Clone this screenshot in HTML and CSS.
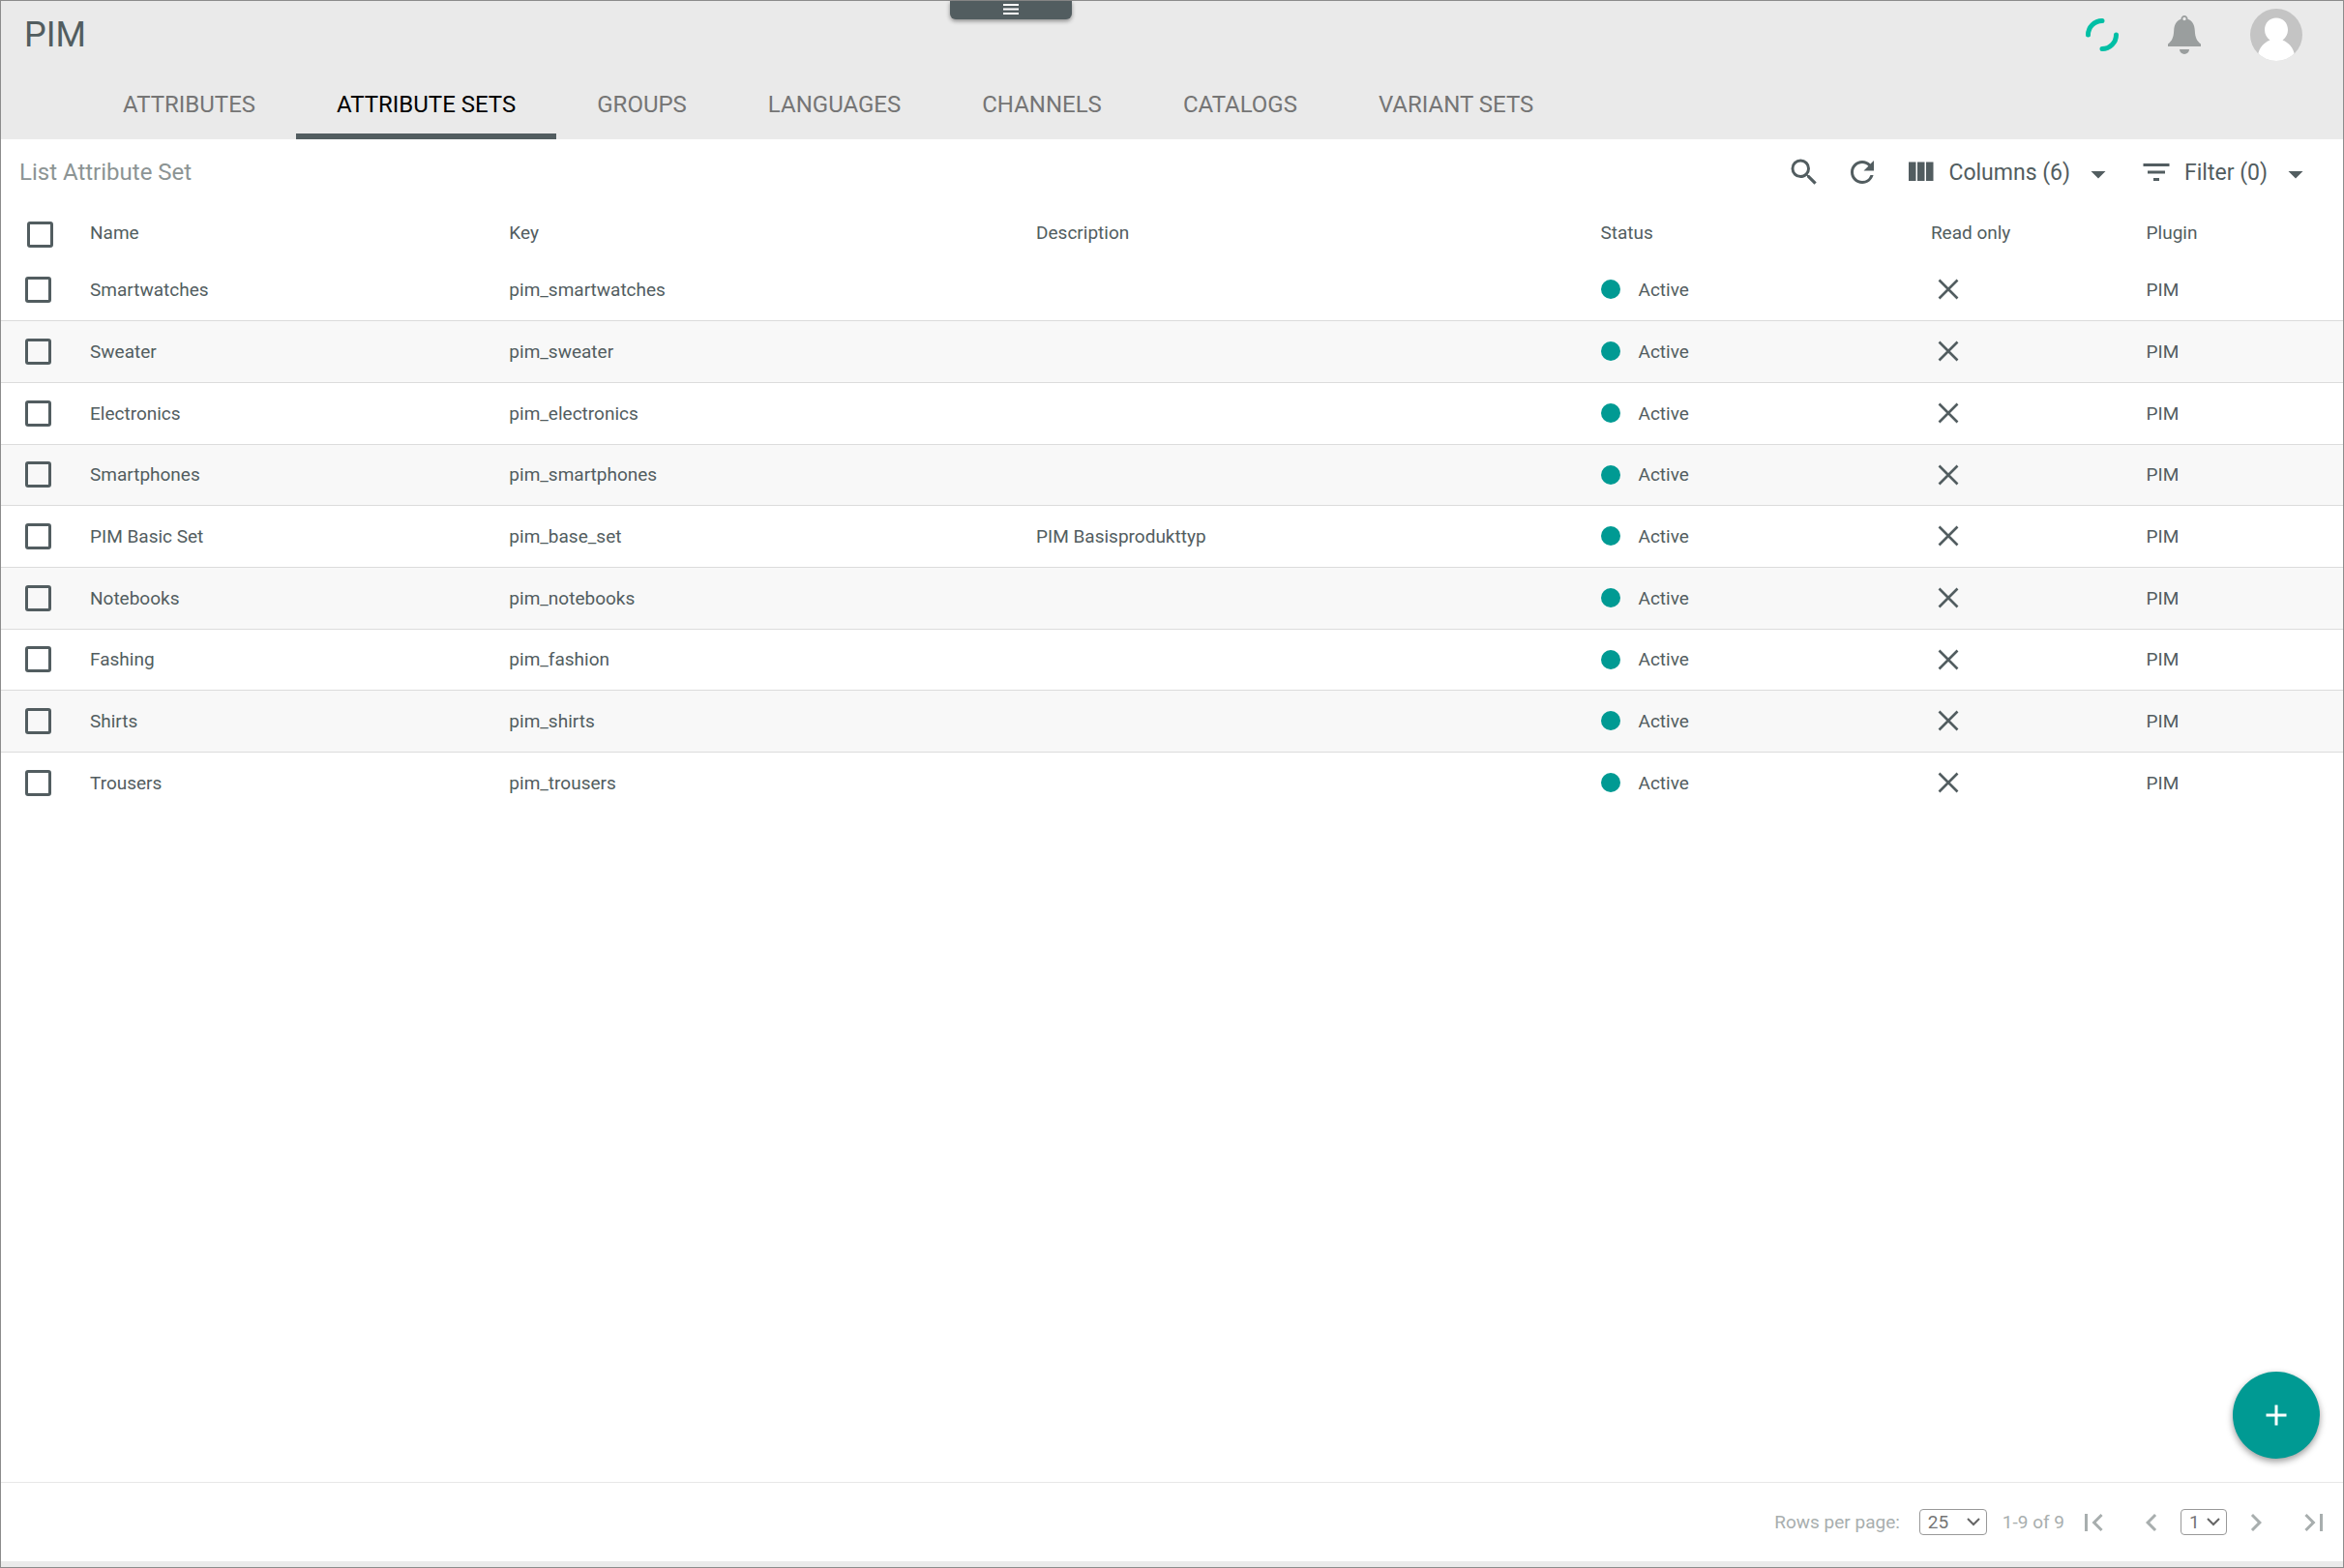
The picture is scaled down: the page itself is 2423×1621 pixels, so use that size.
FILE: index.html
```html
<!DOCTYPE html>
<html lang="en">
<head>
<meta charset="utf-8">
<title>PIM</title>
<link rel="stylesheet" href="styles.css">
</head>
<body>
<svg class="sprite" aria-hidden="true">
  <symbol id="close" viewBox="0 0 24 24"><path d="M2.5 2.5l19 19M21.5 2.5l-19 19" fill="none" stroke="currentColor" stroke-width="2.6"/></symbol>
  <symbol id="drop" viewBox="0 0 24 24"><path d="M7 11.3l5 5 5-5z"/></symbol>
</svg>
<div class="app">
  <header class="header">
    <button class="drawer" aria-label="Open menu"><svg class="drawer-icon" viewBox="0 0 16 11"><path d="M0 0h16v2H0zM0 4.5h16v2H0zM0 9h16v2H0z"/></svg></button>
    <div class="topbar">
      <h1 class="title">PIM</h1>
      <div class="user">
        <svg class="spinner" viewBox="0 0 34 34"><path d="M2.5 17A14.500 14.500 0 0 1 17 2.500M31.500 17A14.500 14.500 0 0 1 17 31.500" fill="none" stroke="#00bfa5" stroke-width="5" stroke-linecap="round"/></svg>
        <button class="plain" aria-label="Notifications"><svg class="bell" viewBox="0 0 34 40"><path fill-rule="evenodd" d="M17 0a3.500 3.500 0 0 1 3.500 3.800C25.500 5.500 27.500 10 27.800 15.500 28.200 22.500 29.500 26 34 29.500V32H0V29.500C4.500 26 5.800 22.500 6.200 15.500 6.500 10 8.500 5.500 13.500 3.800A3.500 3.500 0 0 1 17 0zM17 1.800a1.700 1.700 0 1 0 0 3.400 1.700 1.700 0 0 0 0-3.400zM12 35h10a5 5 0 0 1-10 0z"/></svg></button>
        <button class="plain" aria-label="Account"><svg class="avatar" viewBox="0 0 54 54"><defs><clipPath id="round"><circle cx="27" cy="27" r="27"/></clipPath></defs><g clip-path="url(#round)"><path fill="#c4c4c4" d="M0 0h54v54H0z"/><path fill="#fff" d="M27 9.500c7 0 12 5.200 12 12.500 0 4.500-2.300 8-5.500 10.500 6.500 2.500 11 8 12.500 15V54H8v-6.500c1.500-7 6-12.500 12.500-15C17.300 30 15 26.500 15 22c0-7.300 5-12.500 12-12.500z"/></g></svg></button>
      </div>
    </div>
    <nav class="tabs">
      <a class="tab" href="#attributes">ATTRIBUTES</a>
      <a class="tab active" href="#sets" aria-current="page">ATTRIBUTE SETS</a>
      <a class="tab" href="#groups">GROUPS</a>
      <a class="tab" href="#languages">LANGUAGES</a>
      <a class="tab" href="#channels">CHANNELS</a>
      <a class="tab" href="#catalogs">CATALOGS</a>
      <a class="tab" href="#variants">VARIANT SETS</a>
    </nav>
  </header>
  <main class="main">
    <div class="toolbar">
      <h2 class="list-title">List Attribute Set</h2>
      <div class="tools">
        <button class="plain" aria-label="Search"><svg class="icon" viewBox="0 0 24 24"><path d="M15.500 14h-.79l-.28-.27A6.471 6.471 0 0 0 16 9.500 6.500 6.500 0 1 0 9.500 16c1.610 0 3.090-.59 4.230-1.570l.27.28v.79l5 4.990L20.490 19l-4.990-5zm-6 0C7.010 14 5 11.990 5 9.500S7.010 5 9.500 5 14 7.010 14 9.500 11.990 14 9.500 14z"/></svg></button>
        <button class="plain" aria-label="Refresh"><svg class="icon" viewBox="0 0 24 24"><path d="M17.650 6.350A7.958 7.958 0 0 0 12 4c-4.420 0-7.990 3.580-7.990 8s3.570 8 7.990 8c3.730 0 6.840-2.550 7.730-6h-2.080A5.990 5.990 0 0 1 12 18c-3.310 0-6-2.690-6-6s2.690-6 6-6c1.660 0 3.140.69 4.220 1.780L13 11h7V4l-2.350 2.350z"/></svg></button>
        <button class="plain menu"><svg class="icon" viewBox="0 0 24 24"><path d="M10 18h5V5h-5v13zm-6 0h5V5H4v13zM16 5v13h5V5h-5z"/></svg><span>Columns (6)</span><svg class="icon"><use href="#drop"/></svg></button>
        <button class="plain menu"><svg class="icon" viewBox="0 0 24 24"><path d="M10 18h4v-2h-4v2zM3 6v2h18V6H3zm3 7h12v-2H6v2z"/></svg><span>Filter (0)</span><svg class="icon"><use href="#drop"/></svg></button>
      </div>
    </div>
    <table class="grid">
      <colgroup><col class="c-check"><col class="c-name"><col class="c-key"><col class="c-desc"><col class="c-status"><col class="c-read"><col class="c-plugin"></colgroup>
      <thead>
        <tr><th class="all"><input class="check" type="checkbox" aria-label="Select all"></th><th>Name</th><th>Key</th><th>Description</th><th>Status</th><th>Read only</th><th>Plugin</th></tr>
      </thead>
      <tbody>
        <tr><td><input class="check" type="checkbox" aria-label="Smartwatches"></td><td>Smartwatches</td><td>pim_smartwatches</td><td></td><td><span class="status">Active</span></td><td><svg class="close"><use href="#close"/></svg></td><td>PIM</td></tr>
        <tr><td><input class="check" type="checkbox" aria-label="Sweater"></td><td>Sweater</td><td>pim_sweater</td><td></td><td><span class="status">Active</span></td><td><svg class="close"><use href="#close"/></svg></td><td>PIM</td></tr>
        <tr><td><input class="check" type="checkbox" aria-label="Electronics"></td><td>Electronics</td><td>pim_electronics</td><td></td><td><span class="status">Active</span></td><td><svg class="close"><use href="#close"/></svg></td><td>PIM</td></tr>
        <tr><td><input class="check" type="checkbox" aria-label="Smartphones"></td><td>Smartphones</td><td>pim_smartphones</td><td></td><td><span class="status">Active</span></td><td><svg class="close"><use href="#close"/></svg></td><td>PIM</td></tr>
        <tr><td><input class="check" type="checkbox" aria-label="PIM Basic Set"></td><td>PIM Basic Set</td><td>pim_base_set</td><td>PIM Basisprodukttyp</td><td><span class="status">Active</span></td><td><svg class="close"><use href="#close"/></svg></td><td>PIM</td></tr>
        <tr><td><input class="check" type="checkbox" aria-label="Notebooks"></td><td>Notebooks</td><td>pim_notebooks</td><td></td><td><span class="status">Active</span></td><td><svg class="close"><use href="#close"/></svg></td><td>PIM</td></tr>
        <tr><td><input class="check" type="checkbox" aria-label="Fashing"></td><td>Fashing</td><td>pim_fashion</td><td></td><td><span class="status">Active</span></td><td><svg class="close"><use href="#close"/></svg></td><td>PIM</td></tr>
        <tr><td><input class="check" type="checkbox" aria-label="Shirts"></td><td>Shirts</td><td>pim_shirts</td><td></td><td><span class="status">Active</span></td><td><svg class="close"><use href="#close"/></svg></td><td>PIM</td></tr>
        <tr><td><input class="check" type="checkbox" aria-label="Trousers"></td><td>Trousers</td><td>pim_trousers</td><td></td><td><span class="status">Active</span></td><td><svg class="close"><use href="#close"/></svg></td><td>PIM</td></tr>
      </tbody>
    </table>
    <button class="fab" aria-label="Add attribute set"><svg class="icon" viewBox="0 0 24 24"><path d="M19 13h-6v6h-2v-6H5v-2h6V5h2v6h6v2z"/></svg></button>
  </main>
  <footer class="footer">
    <label for="rows">Rows per page:</label>
    <span class="picker"><select id="rows" class="select wide"><option>25</option><option>50</option></select><svg class="caret" viewBox="0 0 14 9"><path d="M1 1l6 6 6-6"/></svg></span>
    <span class="range">1-9 of 9</span>
    <div class="pager">
      <button class="plain" aria-label="First page"><svg class="icon" viewBox="0 0 24 24"><path d="M18.410 16.590L13.820 12l4.590-4.590L17 6l-6 6 6 6zM6 6h2v12H6z"/></svg></button>
      <button class="plain" aria-label="Previous page"><svg class="icon" viewBox="0 0 24 24"><path d="M15.410 7.410L14 6l-6 6 6 6 1.410-1.410L10.830 12z"/></svg></button>
      <span class="picker"><select class="select" aria-label="Page"><option>1</option></select><svg class="caret" viewBox="0 0 14 9"><path d="M1 1l6 6 6-6"/></svg></span>
      <button class="plain" aria-label="Next page"><svg class="icon" viewBox="0 0 24 24"><path d="M10 6L8.590 7.410 13.170 12l-4.580 4.590L10 18l6-6z"/></svg></button>
      <button class="plain" aria-label="Last page"><svg class="icon" viewBox="0 0 24 24"><path d="M5.590 7.410L10.180 12l-4.590 4.590L7 18l6-6-6-6zM16 6h2v12h-2z"/></svg></button>
    </div>
  </footer>
</div>
</body>
</html>
```
FILE: styles.css
```css
* {
  box-sizing: border-box;
}

body {
  margin: 0;
  background: #eaeaea;
  color: #525d60;
  font-family: Roboto, "Liberation Sans", sans-serif;
  font-size: 19px;
}

svg {
  display: block;
  fill: currentColor;
}

.sprite {
  position: absolute;
  width: 0;
  height: 0;
}

.app {
  display: flex;
  flex-direction: column;
  min-height: 100vh;
  padding-bottom: 6px;
  border: 1px solid #8c8c8c;
}

.plain {
  display: flex;
  align-items: center;
  padding: 0;
  border: 0;
  background: none;
  color: inherit;
  font: inherit;
}

.icon {
  width: 36px;
  height: 36px;
}

.header {
  position: relative;
}

.drawer {
  position: absolute;
  top: 0;
  left: 981px;
  display: flex;
  justify-content: center;
  width: 126px;
  height: 19px;
  padding: 3px 0 0;
  border: 0;
  border-radius: 0 0 6px 6px;
  background: #525d60;
  box-shadow: 0 2px 4px rgba(0, 0, 0, 0.4);
  color: #fff;
}

.drawer-icon {
  width: 16px;
  height: 11px;
}

.topbar {
  display: flex;
  align-items: center;
  justify-content: space-between;
  height: 70px;
  padding: 0 42px 0 24px;
}

.title {
  margin: 0;
  font-size: 36px;
  font-weight: 400;
  line-height: 42px;
}

.user {
  display: flex;
  align-items: center;
  gap: 51px;
}

.spinner {
  width: 34px;
  height: 34px;
}

.bell {
  width: 34px;
  height: 40px;
  color: #9a9e9e;
}

.avatar {
  width: 54px;
  height: 54px;
}

.tabs {
  display: flex;
  padding-left: 84px;
}

.tab {
  padding: 8px 42px 0;
  border-bottom: 6px solid transparent;
  color: #757575;
  font-size: 24px;
  line-height: 59px;
  text-decoration: none;
}

.tab.active {
  border-color: #525d60;
  color: #000;
}

.main {
  position: relative;
  flex: 1;
  background: #fff;
}

.toolbar {
  display: flex;
  align-items: center;
  justify-content: space-between;
  height: 68px;
  padding: 0 31px 0 19px;
  font-size: 23px;
}

.list-title {
  margin: 0;
  color: #8c9494;
  font-size: 24px;
  font-weight: 400;
}

.tools {
  display: flex;
  gap: 24px;
}

.menu {
  gap: 11px;
}

.grid {
  width: 100%;
  border-collapse: collapse;
  table-layout: fixed;
}

.c-check { width: 92px; }
.c-name { width: 17.9%; }
.c-key { width: 22.5%; }
.c-desc { width: 24.1%; }
.c-status { width: 14.1%; }
.c-read { width: 9.2%; }

.grid th,
.grid td {
  padding: 0;
  font-weight: 400;
  text-align: left;
  vertical-align: middle;
}

.grid th {
  height: 56px;
}

.grid td {
  height: 64px;
}

.grid tr:nth-child(3n + 1) td {
  height: 63px;
}

.grid tbody tr:nth-child(even) {
  background: #f8f8f8;
}

.grid tbody tr + tr {
  border-top: 1px solid #dcdcdc;
}

.check {
  display: block;
  width: 27px;
  height: 27px;
  margin: 0 0 0 25px;
  border: 3px solid #525d60;
  border-radius: 3px;
  appearance: none;
}

.all .check {
  margin: 4px 0 0 27px;
}

.status {
  display: flex;
  align-items: center;
  gap: 19px;
}

.status::before {
  width: 20px;
  height: 20px;
  border-radius: 50%;
  background: #009a93;
  content: "";
}

.close {
  width: 24px;
  height: 24px;
  margin-left: 6px;
}

.fab {
  position: absolute;
  right: 24px;
  bottom: 24px;
  display: flex;
  align-items: center;
  justify-content: center;
  width: 90px;
  height: 90px;
  padding: 0;
  border: 0;
  border-radius: 50%;
  background: #009a93;
  box-shadow: 0 3px 7px rgba(0, 0, 0, 0.4);
  color: #fff;
}

.footer {
  display: flex;
  align-items: center;
  justify-content: flex-end;
  height: 82px;
  padding-right: 12px;
  border-top: 1px solid #e8e8e8;
  background: #fff;
  color: #a8aeae;
}

.picker {
  display: grid;
  align-items: center;
  margin-left: 20px;
}

.select {
  grid-area: 1 / 1;
  width: 48px;
  height: 27px;
  padding: 0 0 0 8px;
  border: 1px solid #999;
  border-radius: 4px;
  background: #fff;
  color: #757575;
  font: inherit;
  line-height: 24px;
  appearance: none;
}

.select.wide {
  width: 70px;
}

.caret {
  grid-area: 1 / 1;
  justify-self: end;
  width: 14px;
  height: 9px;
  margin-right: 7px;
  fill: none;
  stroke: #666;
  stroke-width: 2;
  pointer-events: none;
}

.range {
  margin: 0 12px 0 16px;
}

.pager {
  display: flex;
  align-items: center;
  gap: 12px;
}

.pager .plain + .plain,
.pager .plain:last-child {
  margin-left: 12px;
}

.pager .picker {
  margin: 0;
}
```
